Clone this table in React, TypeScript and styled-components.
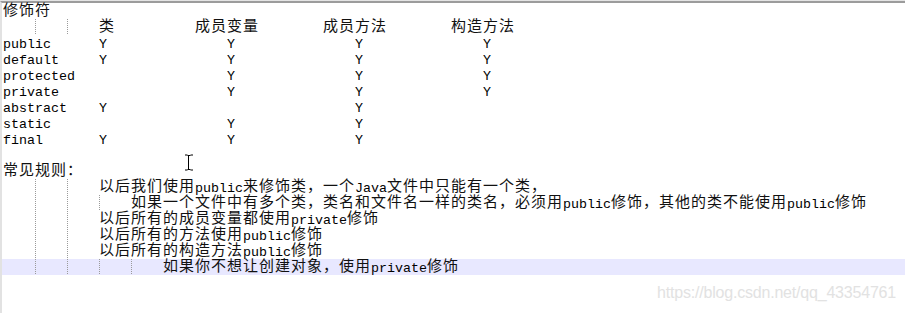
import React from 'react';
import styled, { createGlobalStyle } from 'styled-components';

const GlobalStyle = createGlobalStyle`
  html, body {
    margin: 0;
    padding: 0;
    background: #ffffff;
  }
  #root {
    height: 313px;
  }
`;

const Frame = styled.div`
  position: relative;
  height: 313px;
  box-sizing: border-box;
  border-top: 1px solid #e4e4e4;
  overflow: hidden;
`;

const Editor = styled.div`
  height: 100%;
  box-sizing: border-box;
  border-top: 2px solid #9c9c9c;
  border-left: 2px solid #e2e2e2;
  display: flex;
  flex-direction: column;
`;

const guideLayers = (n: number) =>
  Array.from({ length: n }, () => 'linear-gradient(to bottom, #9a9a9a 50%, transparent 50%)').join(', ');

const guidePositions = (n: number) =>
  Array.from({ length: n }, (_, i) => `${1 + 32 * (i + 1)}px 0`).join(', ');

// 16px per line; baseline pushed down with padding so latin + han share it
const Line = styled.div<{ $guides: number; $active?: boolean }>`
  flex: 0 0 auto;
  height: 12px;
  padding: 4px 0 0 1px;
  line-height: 12px;
  white-space: pre;
  tab-size: 4;
  font-family: 'Liberation Mono', 'Courier New', monospace;
  font-size: 13.333px;
  color: #000;
  background-color: ${({ $active }) => ($active ? '#e8e8ff' : 'transparent')};
  background-image: ${({ $guides }) => ($guides ? guideLayers($guides) : 'none')};
  background-size: 1px 2px;
  background-repeat: repeat-y;
  background-position: ${({ $guides }) => ($guides ? guidePositions($guides) : '0 0')};
`;

const Han = styled.span`
  font-family: 'Noto Sans CJK SC', sans-serif;
  font-size: 15px;
  letter-spacing: 1px;
  line-height: 0;
  vertical-align: 1px;
  color: #111;
`;

const Watermark = styled.div`
  position: absolute;
  right: 9px;
  bottom: 11px;
  font-family: 'Liberation Sans', Arial, sans-serif;
  font-size: 16px;
  line-height: 18px;
  color: #e2e2e2;
  letter-spacing: -0.2px;
`;

const Caret = styled.svg`
  position: absolute;
  left: 184px;
  top: 153px;
`;

const lines: { text: string; guides: number; active?: boolean }[] = [
  { text: '修饰符', guides: 0 },
  { text: '\t\t\t类\t\t\t成员变量\t\t成员方法\t\t构造方法', guides: 2 },
  { text: 'public\t\tY\t\t\t\tY\t\t\t\tY\t\t\t\tY', guides: 0 },
  { text: 'default\t\tY\t\t\t\tY\t\t\t\tY\t\t\t\tY', guides: 0 },
  { text: 'protected\t\t\t\t\tY\t\t\t\tY\t\t\t\tY', guides: 0 },
  { text: 'private\t\t\t\t\t\tY\t\t\t\tY\t\t\t\tY', guides: 0 },
  { text: 'abstract\tY\t\t\t\t\t\t\t\tY', guides: 0 },
  { text: 'static\t\t\t\t\t\tY\t\t\t\tY', guides: 0 },
  { text: 'final\t\tY\t\t\t\tY\t\t\t\tY', guides: 0 },
  { text: '', guides: 0 },
  { text: '常见规则：', guides: 0 },
  { text: '\t\t\t以后我们使用public来修饰类，一个Java文件中只能有一个类，', guides: 2 },
  { text: '\t\t\t\t如果一个文件中有多个类，类名和文件名一样的类名，必须用public修饰，其他的类不能使用public修饰', guides: 3 },
  { text: '\t\t\t以后所有的成员变量都使用private修饰', guides: 2 },
  { text: '\t\t\t以后所有的方法使用public修饰', guides: 2 },
  { text: '\t\t\t以后所有的构造方法public修饰', guides: 2 },
  { text: '\t\t\t\t\t如果你不想让创建对象，使用private修饰', guides: 4, active: true },
];

// split a line into latin and han runs, the han runs get their own font
const splitRuns = (text: string) => {
  const parts: React.ReactNode[] = [];
  const re = /[\u3000-\u9fff\uff00-\uffef]+/g;
  let last = 0;
  let m: RegExpExecArray | null;
  while ((m = re.exec(text))) {
    if (m.index > last) parts.push(text.slice(last, m.index));
    parts.push(<Han key={m.index}>{m[0]}</Han>);
    last = m.index + m[0].length;
  }
  if (last < text.length) parts.push(text.slice(last));
  return parts;
};

export default function App() {
  return (
    <>
      <GlobalStyle />
      <Frame>
        <Editor>
          {lines.map((l, i) => (
            <Line key={i} $guides={l.guides} $active={l.active}>
              {splitRuns(l.text)}
            </Line>
          ))}
        </Editor>
        <Caret width="10" height="17" viewBox="0 0 10 17">
          <path d="M1 1h2.5M6.5 1H9M3.5 1.5h3M4.5 1v15M1 16h2.5M6.5 16H9M3.5 15.5h3" stroke="#000" strokeWidth="1" fill="none" />
        </Caret>
        <Watermark>https://blog.csdn.net/qq_43354761</Watermark>
      </Frame>
    </>
  );
}
